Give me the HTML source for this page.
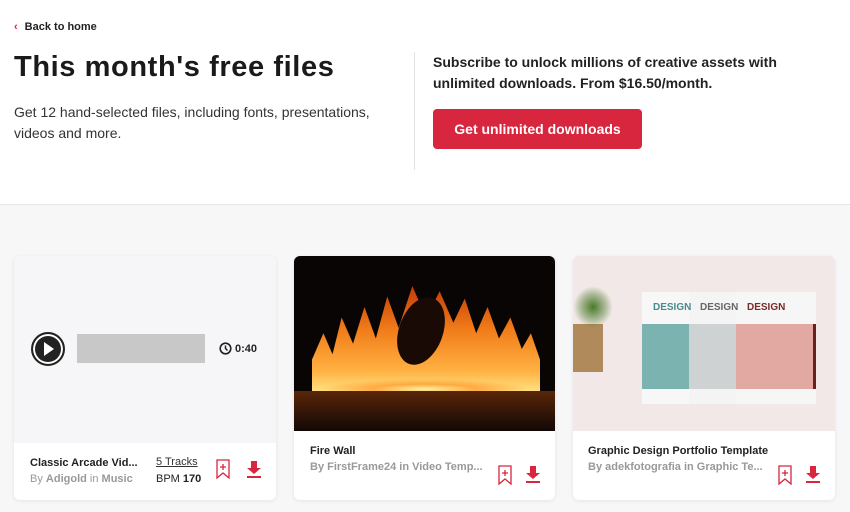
<!DOCTYPE html>
<html><head><meta charset="utf-8"><style>
*{margin:0;padding:0;box-sizing:border-box}
body{width:850px;height:512px;overflow:hidden;font-family:"Liberation Sans",sans-serif;background:#f7f7f8;position:relative;color:#1a1a1a}
.top{position:absolute;left:0;top:0;width:850px;height:205px;background:#fff;border-bottom:1px solid #e6e6e6}
.back{position:absolute;left:14px;top:21px;font-size:11px;font-weight:bold;color:#222}
.back span{color:#d7263d;margin-right:7px}
h1{position:absolute;left:14px;top:51px;font-size:29px;font-weight:bold;letter-spacing:0.6px}
.sub{position:absolute;left:14px;top:102px;font-size:14px;line-height:21px;color:#333;width:380px}
.vline{position:absolute;left:414px;top:52px;width:1px;height:118px;background:#e3e3e3}
.sub2{position:absolute;left:433px;top:52px;font-size:14px;line-height:21px;font-weight:bold;color:#222;width:360px}
.btn{position:absolute;left:433px;top:109px;width:209px;height:40px;background:#d7263d;border-radius:4px;color:#fff;font-size:14px;font-weight:bold;text-align:center;line-height:40px}
.card{position:absolute;top:256px;height:244px;background:#fff;border-radius:6px;overflow:hidden;box-shadow:0 1px 4px rgba(0,0,0,.08)}
.t{position:absolute;font-size:11px;font-weight:bold;color:#222;white-space:nowrap}
.g{position:absolute;font-size:11px;font-weight:bold;color:#999;white-space:nowrap}
.ic{position:absolute}
</style></head><body>
<div class="top">
<div class="back"><span>‹</span>Back to home</div>
<h1>This month's free files</h1>
<div class="sub">Get 12 hand-selected files, including fonts, presentations, videos and more.</div>
<div class="vline"></div>
<div class="sub2">Subscribe to unlock millions of creative assets with unlimited downloads. From $16.50/month.</div>
<div class="btn">Get unlimited downloads</div>
</div>

<div class="card" style="left:14px;width:262px">
<div style="position:absolute;left:0;top:0;width:262px;height:187px;background:#f6f6f8"></div>
<div style="position:absolute;left:17px;top:76px;width:34px;height:34px;border-radius:50%;background:#222;border:2px solid #222;box-shadow:inset 0 0 0 2px #fff,inset 0 0 0 4px #222"></div>
<div style="position:absolute;left:30px;top:86px;width:0;height:0;border-left:10px solid #fff;border-top:7px solid transparent;border-bottom:7px solid transparent"></div>
<div style="position:absolute;left:63px;top:78px;width:128px;height:29px;background:#c8c8c8"></div>
<svg class="ic" style="left:205px;top:86px" width="13" height="13" viewBox="0 0 13 13"><circle cx="6.5" cy="6.5" r="5.3" fill="none" stroke="#222" stroke-width="1.6"/><path d="M6.5 3.5V6.5L8.5 8.5" fill="none" stroke="#222" stroke-width="1.5"/></svg>
<div class="t" style="left:221px;top:87px">0:40</div>
<div class="t" style="left:16px;top:201px">Classic Arcade Vid...</div>
<div class="g" style="left:16px;top:217px;font-weight:normal">By <b>Adigold</b> in <b>Music</b></div>
<div class="t" style="left:142px;top:200px;font-weight:normal;color:#333;text-decoration:underline">5 Tracks</div>
<div class="t" style="left:142px;top:217px;font-weight:normal;color:#222">BPM <b>170</b></div>
<svg class="ic" style="left:202px;top:203px" width="14" height="20" viewBox="0 0 14 20"><path d="M1 1H13V19L7 14L1 19Z" fill="none" stroke="#d7263d" stroke-width="1.3"/><path d="M7 5V11M4 8H10" stroke="#d7263d" stroke-width="1.3"/></svg>
<svg class="ic" style="left:232px;top:205px" width="16" height="18" viewBox="0 0 16 18"><path d="M5 0H11V7H15L8 13L1 7H5Z" fill="#d7263d"/><rect x="1" y="15" width="14" height="2" fill="#d7263d"/></svg>
</div>

<div class="card" style="left:294px;width:261px">
<div style="position:absolute;left:0;top:0;width:261px;height:175px;background:#080504"></div>
<div style="position:absolute;left:18px;top:30px;width:228px;height:105px;background:linear-gradient(#c03a08,#f07a18 40%,#ffb040 80%,#ffe080);clip-path:polygon(0 100%,0 70%,5% 45%,9% 65%,13% 30%,18% 55%,23% 20%,28% 50%,33% 10%,38% 40%,44% 0,50% 30%,56% 5%,62% 35%,67% 12%,72% 45%,77% 20%,82% 50%,87% 30%,92% 60%,96% 45%,100% 70%,100% 100%)"></div>
<div style="position:absolute;left:105px;top:40px;width:44px;height:70px;border-radius:50%;background:#1a0a05;transform:rotate(20deg)"></div>
<div style="position:absolute;left:0;top:118px;width:261px;height:30px;background:radial-gradient(ellipse 50% 40% at 50% 50%,#fff0a0,rgba(255,140,30,.6) 40%,rgba(0,0,0,0) 80%)"></div>
<div style="position:absolute;left:0;top:135px;width:261px;height:40px;background:linear-gradient(#5a2608,#120806)"></div>
<div class="t" style="left:16px;top:189px">Fire Wall</div>
<div class="g" style="left:16px;top:205px">By FirstFrame24 in Video Temp...</div>
<svg class="ic" style="left:204px;top:209px" width="14" height="20" viewBox="0 0 14 20"><path d="M1 1H13V19L7 14L1 19Z" fill="none" stroke="#d7263d" stroke-width="1.3"/><path d="M7 5V11M4 8H10" stroke="#d7263d" stroke-width="1.3"/></svg>
<svg class="ic" style="left:231px;top:210px" width="16" height="18" viewBox="0 0 16 18"><path d="M5 0H11V7H15L8 13L1 7H5Z" fill="#d7263d"/><rect x="1" y="15" width="14" height="2" fill="#d7263d"/></svg>
</div>

<div class="card" style="left:573px;width:262px">
<div style="position:absolute;left:0;top:0;width:262px;height:175px;background:#f3e8e8"></div>
<div style="position:absolute;left:0;top:68px;width:30px;height:48px;background:#b08a5a"></div>
<div style="position:absolute;left:0;top:30px;width:40px;height:42px;background:radial-gradient(#4a7a2a,rgba(74,122,42,.4) 45%,rgba(0,0,0,0) 70%)"></div>
<div style="position:absolute;left:69px;top:36px;width:47px;height:112px;background:#f7f7f7"><div style="margin-top:32px;height:65px;background:#7ab3b0"></div></div>
<div style="position:absolute;left:116px;top:36px;width:47px;height:112px;background:#f4f4f4"><div style="margin-top:32px;height:65px;background:#cfd2d3"></div></div>
<div style="position:absolute;left:163px;top:36px;width:80px;height:112px;background:#f6f6f6"><div style="margin-top:32px;height:65px;background:#e2a8a2;border-right:3px solid #6a2020"></div></div>
<div style="position:absolute;left:80px;top:46px;font-size:10px;font-weight:bold;color:#4a8a8a">DESIGN</div>
<div style="position:absolute;left:127px;top:46px;font-size:10px;font-weight:bold;color:#666">DESIGN</div>
<div style="position:absolute;left:174px;top:46px;font-size:10px;font-weight:bold;color:#7a2a2a">DESIGN</div>
<div class="t" style="left:15px;top:189px">Graphic Design Portfolio Template</div>
<div class="g" style="left:15px;top:205px">By adekfotografia in Graphic Te...</div>
<svg class="ic" style="left:205px;top:209px" width="14" height="20" viewBox="0 0 14 20"><path d="M1 1H13V19L7 14L1 19Z" fill="none" stroke="#d7263d" stroke-width="1.3"/><path d="M7 5V11M4 8H10" stroke="#d7263d" stroke-width="1.3"/></svg>
<svg class="ic" style="left:232px;top:210px" width="16" height="18" viewBox="0 0 16 18"><path d="M5 0H11V7H15L8 13L1 7H5Z" fill="#d7263d"/><rect x="1" y="15" width="14" height="2" fill="#d7263d"/></svg>
</div>
</body></html>
